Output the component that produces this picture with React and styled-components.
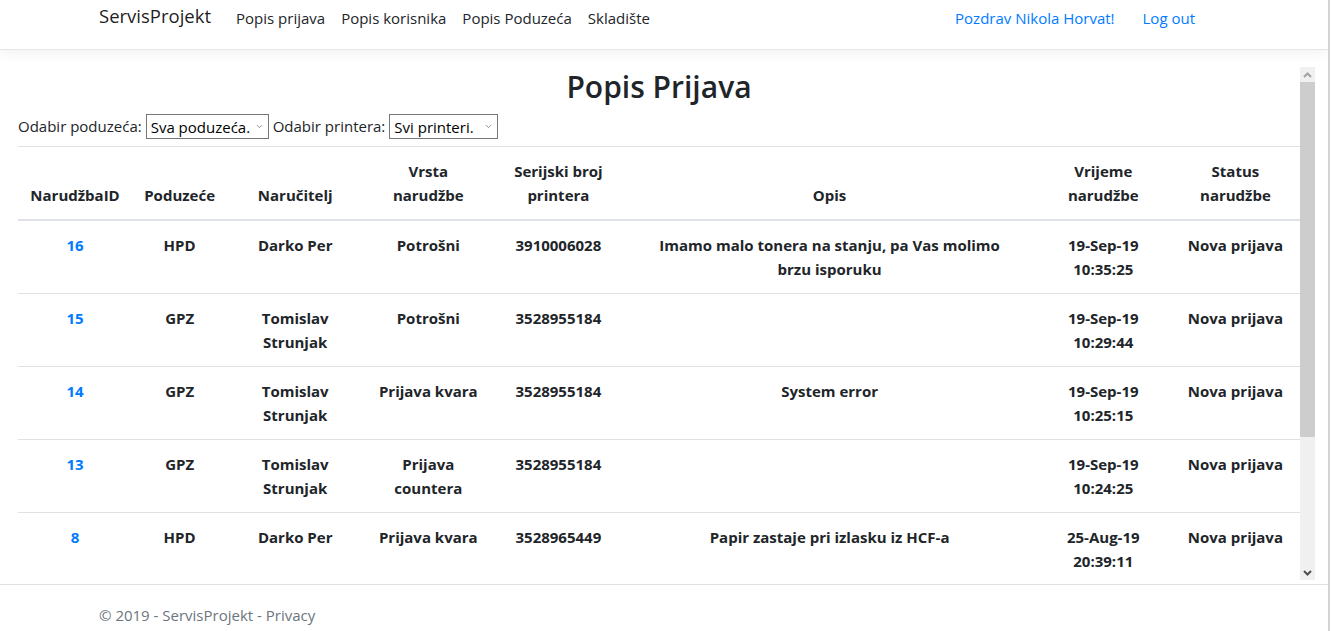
import React from 'react'
import styled, { createGlobalStyle } from 'styled-components'
import { ChevronDown } from 'lucide-react'

const GlobalStyle = createGlobalStyle`
    html, body {
        margin: 0;
        padding: 0;
        overflow: hidden;
        background: #fff;
    }
    body {
        font-family: "Open Sans", "Liberation Sans", sans-serif;
        font-size: 15px;
        line-height: 24px;
        color: #212529;
    }
`;

const Page = styled.div`
    width: 1328px;
    height: 631px;
    border-right: 2px solid #d4d4d4;
    overflow: hidden;
`;

const NavBar = styled.nav`
    height: 49px;
    border-bottom: 1px solid #e5e5e5;
    box-shadow: 0 .25rem .75rem rgba(0, 0, 0, .05);
    display: flex;
    align-items: flex-start;
    padding: 0 125px 0 99px;
    background: #fff;
    position: relative;
`;

const Brand = styled.a`
    font-size: 18.5px;
    line-height: 30px;
    padding-top: 1px;
    color: rgba(0, 0, 0, .9);
    margin-right: 17px;
    text-decoration: none;
`;

const NavList = styled.div`
    display: flex;
    margin-left: ${p => (p.$right ? 'auto' : '0')};
    gap: ${p => (p.$right ? '12px' : '0')};
`;

const NavLink = styled.a`
    padding: 6px 8px 0;
    line-height: 24px;
    color: ${p => (p.$blue ? '#007bff' : '#212529')};
    text-decoration: none;
`;

const Main = styled.main`
    margin-top: 17px;
    padding: 0 13px 0 18px;
`;

const ScrollFrame = styled.div`
    display: flex;
    height: 513px;
`;

const ScrollContent = styled.div`
    flex: 1;
    min-width: 0;
    overflow: hidden;
`;

const ScrollBar = styled.div`
    width: 15px;
    flex: none;
    display: flex;
    flex-direction: column;
    background: #f0f0f0;
`;

const ScrollButton = styled.div`
    height: 15px;
    display: flex;
    align-items: center;
    justify-content: center;
    color: ${p => (p.$active ? '#505050' : '#a3a3a3')};
`;

const ScrollThumb = styled.div`
    height: 355px;
    background: #cdcdcd;
`;

const ScrollTrack = styled.div`
    flex: 1;
`;

const Title = styled.h1`
    margin: 0 0 6px;
    font-size: 30px;
    line-height: 40px;
    font-weight: 600;
    text-align: center;
`;

const Filters = styled.div`
    display: flex;
    align-items: center;
    gap: 4px;
    height: 26px;
    margin-bottom: 7px;
`;

const SelectWrap = styled.div`
    position: relative;
    width: ${p => p.$w}px;
    height: 25px;
    box-sizing: border-box;
    border: 1px solid #767676;
    background: #fff;

    svg {
        position: absolute;
        right: 4px;
        top: 7px;
        color: #6d6d6d;
        pointer-events: none;
    }
`;

const Select = styled.select`
    appearance: none;
    border: none;
    outline: none;
    background: transparent;
    width: 100%;
    height: 100%;
    padding: 0 14px 0 4px;
    font-family: "Open Sans", "Liberation Sans", sans-serif;
    font-size: 15px;
    color: #000;
`;

const Table = styled.table`
    width: 100%;
    table-layout: fixed;
    border-collapse: collapse;
    margin-bottom: 16px;
`;

const Th = styled.th`
    padding: 12px;
    vertical-align: bottom;
    border-top: 1px solid #dee2e6;
    border-bottom: 2px solid #dee2e6;
    font-weight: 700;
    text-align: center;
`;

const Td = styled.td`
    padding: 12px;
    vertical-align: top;
    border-top: 1px solid #dee2e6;
    font-weight: 700;
    text-align: center;
`;

const Desc = styled.span`
    display: inline-block;
    max-width: 345px;
`;

const IdLink = styled.a`
    color: #007bff;
    text-decoration: none;
`;

const Footer = styled.footer`
    margin-top: 4px;
    border-top: 1px solid #dee2e6;
    line-height: 60px;
    padding-left: 99px;
    color: #6c757d;
`;

const columns = [
    { label: 'NarudžbaID', w: 114 },
    { label: 'Poduzeće', w: 95 },
    { label: 'Naručitelj', w: 136 },
    { label: 'Vrsta narudžbe', w: 130 },
    { label: 'Serijski broj printera', w: 130 },
    { label: 'Opis', w: 412 },
    { label: 'Vrijeme narudžbe', w: 135 },
    { label: 'Status narudžbe', w: 129 },
];

const rows = [
    { id: 16, firm: 'HPD', who: 'Darko Per', type: 'Potrošni', serial: '3910006028', desc: 'Imamo malo tonera na stanju, pa Vas molimo brzu isporuku', date: '19-Sep-19 10:35:25', status: 'Nova prijava' },
    { id: 15, firm: 'GPZ', who: 'Tomislav Strunjak', type: 'Potrošni', serial: '3528955184', desc: '', date: '19-Sep-19 10:29:44', status: 'Nova prijava' },
    { id: 14, firm: 'GPZ', who: 'Tomislav Strunjak', type: 'Prijava kvara', serial: '3528955184', desc: 'System error', date: '19-Sep-19 10:25:15', status: 'Nova prijava' },
    { id: 13, firm: 'GPZ', who: 'Tomislav Strunjak', type: 'Prijava countera', serial: '3528955184', desc: '', date: '19-Sep-19 10:24:25', status: 'Nova prijava' },
    { id: 8, firm: 'HPD', who: 'Darko Per', type: 'Prijava kvara', serial: '3528965449', desc: 'Papir zastaje pri izlasku iz HCF-a', date: '25-Aug-19 20:39:11', status: 'Nova prijava' },
];

const Arrow = ({ up }) => (
    <svg width="9" height="6" viewBox="0 0 9 6">
        <path d={up ? 'M1 5 L4.5 1.5 L8 5' : 'M1 1 L4.5 4.5 L8 1'} fill="none" stroke="currentColor" strokeWidth="2" />
    </svg>
);

export default function App() {
    return (
        <Page>
            <GlobalStyle />
            <NavBar>
                <Brand>ServisProjekt</Brand>
                <NavList>
                    <NavLink>Popis prijava</NavLink>
                    <NavLink>Popis korisnika</NavLink>
                    <NavLink>Popis Poduzeća</NavLink>
                    <NavLink>Skladište</NavLink>
                </NavList>
                <NavList $right>
                    <NavLink $blue>Pozdrav Nikola Horvat!</NavLink>
                    <NavLink $blue>Log out</NavLink>
                </NavList>
            </NavBar>
            <Main>
                <ScrollFrame>
                    <ScrollContent>
                        <Title>Popis Prijava</Title>
                        <Filters>
                            <span>Odabir poduzeća:</span>
                            <SelectWrap $w={123}>
                                <Select defaultValue="all">
                                    <option value="all">Sva poduzeća.</option>
                                    <option value="hpd">HPD</option>
                                    <option value="gpz">GPZ</option>
                                </Select>
                                <ChevronDown size={9} strokeWidth={2} />
                            </SelectWrap>
                            <span>Odabir printera:</span>
                            <SelectWrap $w={109}>
                                <Select defaultValue="all">
                                    <option value="all">Svi printeri.</option>
                                </Select>
                                <ChevronDown size={9} strokeWidth={2} />
                            </SelectWrap>
                        </Filters>
                        <Table>
                            <colgroup>
                                {columns.map(c => <col key={c.label} style={{ width: c.w }} />)}
                            </colgroup>
                            <thead>
                                <tr>
                                    {columns.map(c => <Th key={c.label}>{c.label}</Th>)}
                                </tr>
                            </thead>
                            <tbody>
                                {rows.map(r => (
                                    <tr key={r.id}>
                                        <Td><IdLink>{r.id}</IdLink></Td>
                                        <Td>{r.firm}</Td>
                                        <Td>{r.who}</Td>
                                        <Td>{r.type}</Td>
                                        <Td>{r.serial}</Td>
                                        <Td><Desc>{r.desc}</Desc></Td>
                                        <Td>{r.date}</Td>
                                        <Td>{r.status}</Td>
                                    </tr>
                                ))}
                            </tbody>
                        </Table>
                    </ScrollContent>
                    <ScrollBar>
                        <ScrollButton><Arrow up /></ScrollButton>
                        <ScrollThumb />
                        <ScrollTrack />
                        <ScrollButton $active><Arrow /></ScrollButton>
                    </ScrollBar>
                </ScrollFrame>
            </Main>
            <Footer>© 2019 - ServisProjekt - Privacy</Footer>
        </Page>
    )
}
